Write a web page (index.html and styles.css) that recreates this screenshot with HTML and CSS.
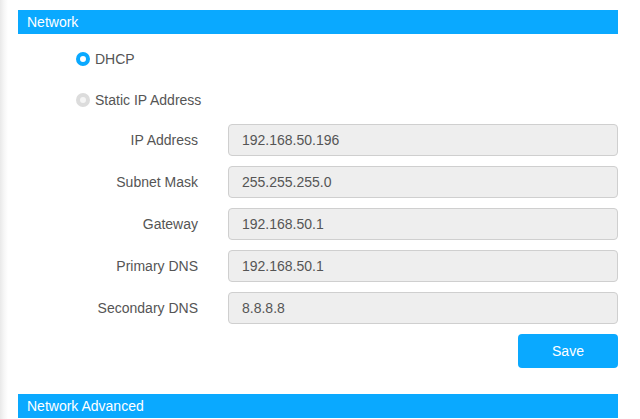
FILE: index.html
```html
<!DOCTYPE html>
<html>
<head>
<meta charset="utf-8">
<link rel="stylesheet" href="styles.css">
</head>
<body>
<div class="page">
  <section class="panel">
    <div class="panel-title">Network</div>
    <div class="radios">
      <label class="radio-row"><span class="radio checked"></span><span>DHCP</span></label>
      <label class="radio-row"><span class="radio disabled"></span><span>Static IP Address</span></label>
    </div>
    <div class="form">
      <div class="field"><span class="field-label">IP Address</span><div class="input">192.168.50.196</div></div>
      <div class="field"><span class="field-label">Subnet Mask</span><div class="input">255.255.255.0</div></div>
      <div class="field"><span class="field-label">Gateway</span><div class="input">192.168.50.1</div></div>
      <div class="field"><span class="field-label">Primary DNS</span><div class="input">192.168.50.1</div></div>
      <div class="field"><span class="field-label">Secondary DNS</span><div class="input">8.8.8.8</div></div>
    </div>
    <div class="actions"><button class="btn">Save</button></div>
  </section>
  <section class="panel">
    <div class="panel-title">Network Advanced</div>
  </section>
</div>
</body>
</html>
```
FILE: styles.css
```css
html, body {
  margin: 0;
  padding: 0;
  height: 100%;
  overflow: hidden;
}
body {
  background: linear-gradient(to right, #e9e9e9 0, #f6f6f6 4px, #ffffff 8px);
  font-family: "Liberation Sans", Arial, sans-serif;
  font-size: 14px;
  color: #555;
}
.page {
  padding: 10px 0 0 18px;
  width: 600px;
}
.panel-title {
  background: #0aa9ff;
  color: #fff;
  height: 24px;
  line-height: 24px;
  padding-left: 9px;
  font-size: 14px;
}
.radios {
  display: flex;
  flex-direction: column;
  gap: 21px;
  padding: 15px 0 0 58px;
}
.radio-row {
  display: flex;
  align-items: center;
  height: 20px;
  gap: 5px;
  font-size: 14px;
  color: #555;
}
.radio {
  width: 14px;
  height: 14px;
  box-sizing: border-box;
  border-radius: 50%;
  border: 4px solid #0aa9ff;
  background: #fff;
}
.radio.disabled {
  border-color: #dcdcdc;
  background: #f5f5f5;
}
.form {
  display: flex;
  flex-direction: column;
  gap: 10px;
  margin-top: 14px;
}
.field {
  display: flex;
  align-items: center;
  gap: 30px;
}
.field-label {
  width: 180px;
  text-align: right;
}
.input {
  box-sizing: border-box;
  width: 390px;
  height: 32px;
  line-height: 30px;
  border: 1px solid #cfcfcf;
  border-radius: 4px;
  background: #eeeeee;
  padding-left: 13px;
  color: #555;
}
.actions {
  display: flex;
  justify-content: flex-end;
  margin-top: 10px;
  margin-bottom: 26px;
}
.btn {
  width: 100px;
  height: 34px;
  border: none;
  border-radius: 4px;
  background: #0aa9ff;
  color: #fff;
  font-family: "Liberation Sans", Arial, sans-serif;
  font-size: 14px;
}
```
